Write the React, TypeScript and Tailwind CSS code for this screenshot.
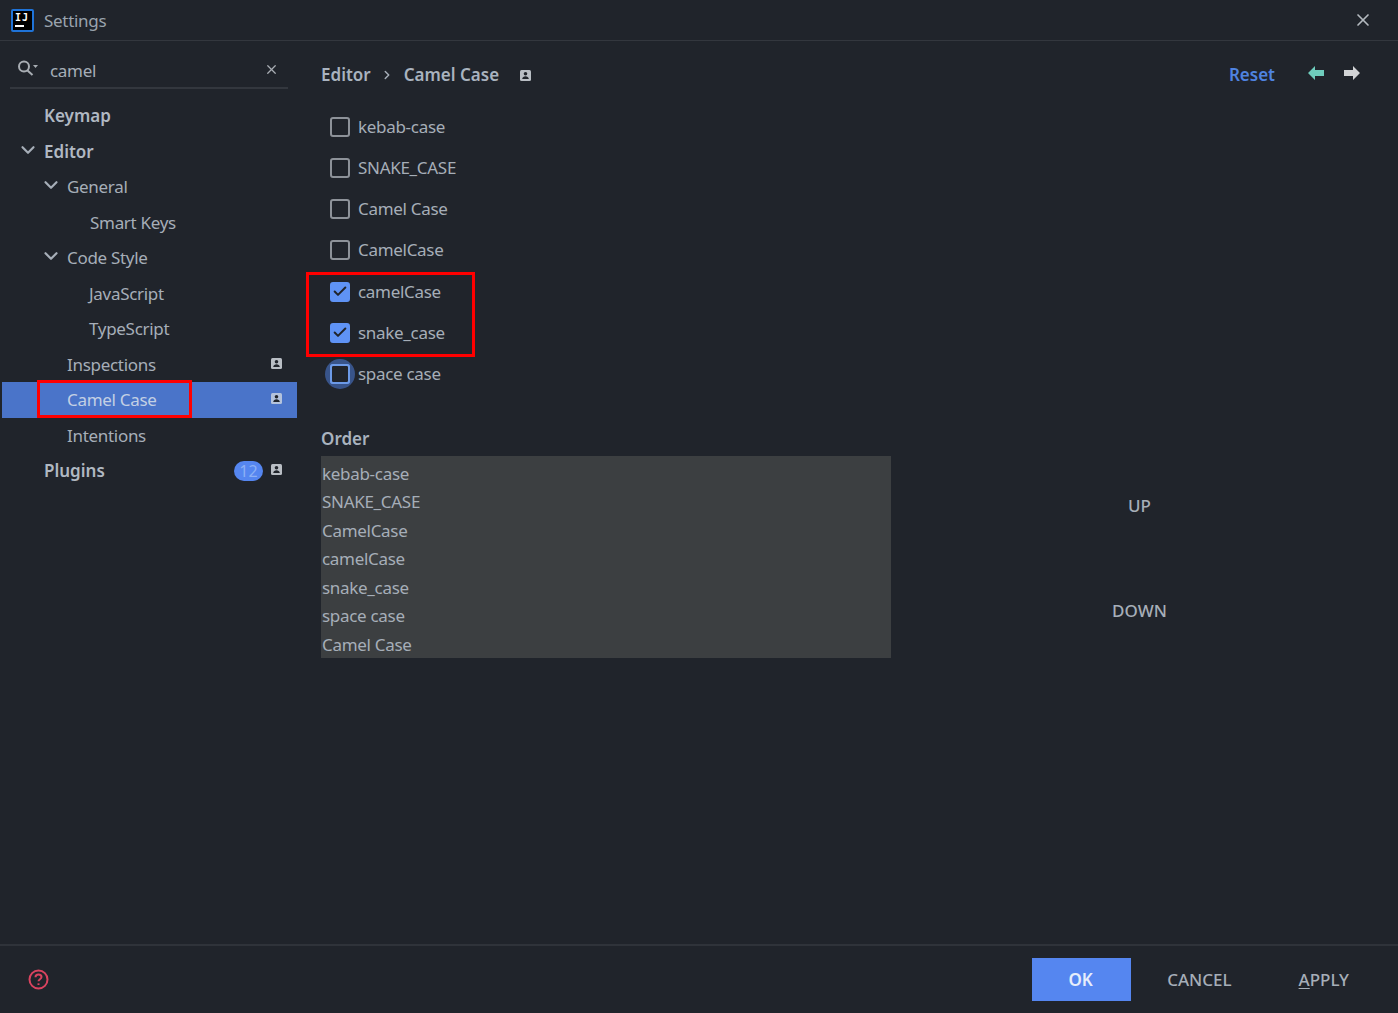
import { Check, ChevronDown, ChevronRight, X } from "lucide-react";

const font = { fontFamily: '"Noto Sans", sans-serif' };

const treeItems = [
  { label: "Keymap", indent: 44, bold: true },
  { label: "Editor", indent: 44, bold: true, open: true },
  { label: "General", indent: 67, open: true },
  { label: "Smart Keys", indent: 90 },
  { label: "Code Style", indent: 67, open: true },
  { label: "JavaScript", indent: 89 },
  { label: "TypeScript", indent: 89 },
  { label: "Inspections", indent: 67, profile: true },
  { label: "Camel Case", indent: 67, profile: true, selected: true },
  { label: "Intentions", indent: 67 },
  { label: "Plugins", indent: 44, bold: true, profile: true, badge: "12" },
];

const orderItems = [
  "kebab-case",
  "SNAKE_CASE",
  "CamelCase",
  "camelCase",
  "snake_case",
  "space case",
  "Camel Case",
];

function ProfileIcon({ className = "" }: { className?: string }) {
  return (
    <svg width="11" height="11" viewBox="0 0 11 11" className={className}>
      <rect width="11" height="11" rx="1.5" fill="currentColor" />
      <circle cx="5.5" cy="3.8" r="1.8" fill="#20242b" />
      <path d="M2.2 9c.3-2 1.6-2.8 3.3-2.8S8.500 7 8.800 9z" fill="#20242b" />
    </svg>
  );
}

function Logo() {
  return (
    <div className="w-[23px] h-[23px] bg-black border-2 border-[#1f73d8] rounded-[2px] flex flex-col px-[2px] pt-[1px]">
      <div className="flex gap-[1px] text-[10px] leading-[11px] font-bold text-white tracking-normal font-['DejaVu_Sans_Mono']">
        <span>I</span>
        <span>J</span>
      </div>
      <span className="w-[9px] h-[2px] bg-white mt-[2px]" />
    </div>
  );
}

function SearchIcon() {
  return (
    <svg width="20" height="18" viewBox="0 0 20 18" fill="none" stroke="#a8adb3" strokeWidth="2" className="-mt-[4px]">
      <circle cx="6" cy="6.500" r="5" />
      <path d="M9.500 10.500l5 4.500" />
      <path d="M15 5h5l-2.500 3z" fill="#a8adb3" stroke="none" />
    </svg>
  );
}

function TreeRow({ item }: { item: (typeof treeItems)[number] }) {
  return (
    <div
      className={`relative h-[35.5px] flex items-center ${
        item.selected ? "bg-[#4a74c9] text-[#c3d0e4] ml-[2px]" : "text-[#a6aeb8]"
      } ${item.bold ? "font-semibold text-[#b0b8c2] tracking-normal" : ""}`}
      style={{ paddingLeft: item.selected ? item.indent - 2 : item.indent }}
    >
      {item.open && (
        <ChevronDown
          size={22}
          strokeWidth={2.4}
          className="absolute top-[5px] text-[#a6aeb8]"
          style={{ left: item.indent - 27 }}
        />
      )}
      <span className="mt-[1px]">{item.label}</span>
      {item.selected && (
        <div className="absolute left-[35px] top-[-2px] w-[155px] h-[38px] border-[3px] border-[#ff0000]" />
      )}
      {item.badge && (
        <span className="absolute left-[234px] top-[8px] w-[29px] h-[20px] rounded-full bg-[#5586f0] text-[#8cb0f5] text-[16px] leading-[20px] text-center font-normal">
          {item.badge}
        </span>
      )}
      {item.profile && (
        <ProfileIcon
          className={`absolute top-[11px] ${item.selected ? "left-[269px] text-[#b4c3dc]" : "left-[271px] text-[#b9bec4]"}`}
        />
      )}
    </div>
  );
}

function CheckRow({ label, checked, focused }: { label: string; checked?: boolean; focused?: boolean }) {
  return (
    <div className="h-[41.25px] flex items-center gap-[8px] pl-[9px] text-[#a6aeb8]">
      <div
        className={`relative w-[20px] h-[20px] rounded-[3px] flex items-center justify-center border-2 ${
          checked ? "bg-[#5f93f5] border-[#5f93f5]" : focused ? "border-[#6c9ae8]" : "border-[#8d9299]"
        }`}
      >
        {focused && <div className="absolute -inset-[7px] rounded-full bg-[#4a74c9] opacity-60" />}
        {focused && <div className="absolute inset-0 rounded-[1px] bg-[#20242b] outline-2 outline-[#6c9ae8]" />}
        {checked && <Check size={17} strokeWidth={3} className="text-[#20242b]" />}
      </div>
      <span>{label}</span>
    </div>
  );
}

export default function App() {
  return (
    <div
      className="w-[1398px] h-[1013px] bg-[#20242b] flex flex-col text-[17px] leading-[24px] tracking-[-0.3px] text-[#a6aeb8] overflow-hidden"
      style={font}
    >
      <header className="h-[41px] shrink-0 border-b border-[#33373e] flex items-center pl-[11px] pr-[25px]">
        <Logo />
        <span className="ml-[10px] mt-[2px] text-[#9aa3ae]">Settings</span>
        <X size={20} strokeWidth={2} className="ml-auto text-[#b4b9bf]" />
      </header>

      <div className="flex-1 flex min-h-0">
        <aside className="w-[297px] shrink-0 flex flex-col">
          <div className="ml-[10px] mr-[9px] mt-[14px] h-[34px] border-b-2 border-[#33373e] flex items-center pl-[8px] pr-[9px]">
            <SearchIcon />
            <span className="ml-[12px]">camel</span>
            <X size={15} strokeWidth={2} className="ml-auto -mt-[3px] text-[#a8adb3]" />
          </div>
          <nav className="mt-[9px]">
            {treeItems.map((item) => (
              <TreeRow key={item.label} item={item} />
            ))}
          </nav>
        </aside>

        <main className="flex-1 flex flex-col pl-[24px] pr-[28px]">
          <div className="h-[46px] mt-[11px] flex items-center font-semibold tracking-normal text-[#a9b3bf]">
            <span>Editor</span>
            <ChevronRight size={14} strokeWidth={2.5} className="ml-[9px] mr-[10px] text-[#a6aeb8]" />
            <span>Camel Case</span>
            <ProfileIcon className="ml-[21px] text-[#b9bec4]" />
            <span className="ml-auto text-[#4f83e0]">Reset</span>
            <svg width="16" height="14" viewBox="0 0 16 14" className="ml-[33px] mb-[4px]">
              <path d="M0 7l7-7v4h9v6H7v4z" fill="#6fcdbd" />
            </svg>
            <svg width="16" height="14" viewBox="0 0 16 14" className="ml-[20px] mr-[10px] mb-[4px]">
              <path d="M16 7L9 0v4H0v6h9v4z" fill="#d2d4d6" />
            </svg>
          </div>

          <div className="mt-[8px] flex flex-col">
            <CheckRow label="kebab-case" />
            <CheckRow label="SNAKE_CASE" />
            <CheckRow label="Camel Case" />
            <CheckRow label="CamelCase" />
            <div className="relative">
              <CheckRow label="camelCase" checked />
              <CheckRow label="snake_case" checked />
              <div className="absolute left-[-15px] top-[1px] w-[169px] h-[85px] border-[3px] border-[#ff0000]" />
            </div>
            <CheckRow label="space case" focused />
          </div>

          <div className="mt-[32px] font-semibold tracking-normal text-[#a9b3bf]">Order</div>

          <div className="mt-[5px] flex items-start">
            <ul className="w-[570px] h-[202px] bg-[#3c3f41] pl-[1px] pt-[3.5px]">
              {orderItems.map((label) => (
                <li key={label} className="h-[28.5px] flex items-center">
                  {label}
                </li>
              ))}
            </ul>
            <div className="flex-1 flex flex-col items-center pt-[38.5px] font-medium tracking-normal text-[#a6aeb8] pl-[18px]">
              <span>UP</span>
              <span className="mt-[81px]">DOWN</span>
            </div>
          </div>
        </main>
      </div>

      <footer className="h-[69px] shrink-0 border-t-2 border-[#2f333a] flex items-center pl-[28px] pr-[49px]">
        <svg width="21" height="21" viewBox="0 0 21 21" fill="none" stroke="#d9435f" strokeWidth="2" className="-mt-[1px]">
          <circle cx="10.500" cy="10.500" r="9" />
          <path d="M7.500 8.200c0-1.700 1.300-2.700 3-2.700s3 1 3 2.500c0 2.200-3 2.200-3 4.300" />
          <path d="M10.500 14.300v1.700" />
        </svg>
        <div className="ml-auto flex items-center font-medium tracking-normal">
          <button className="w-[99px] h-[43px] bg-[#5586f0] text-[#e6edfb] font-semibold pt-[1px] pr-[2px]">OK</button>
          <button className="ml-[36px] pt-[1px] text-[#a6aeb8] font-medium">CANCEL</button>
          <button className="ml-[67px] pt-[1px] text-[#a6aeb8] font-medium">
            <span className="underline underline-offset-2">A</span>PPLY
          </button>
        </div>
      </footer>
    </div>
  );
}
